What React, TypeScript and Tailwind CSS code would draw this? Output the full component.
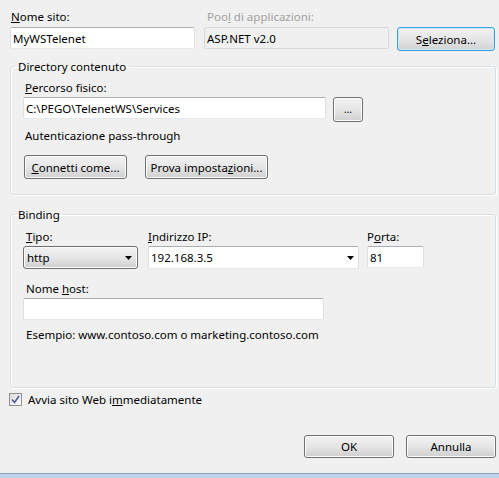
import React from 'react'

const chrome =
  'flex items-center rounded-[3px] border border-[#707070] bg-gradient-to-b from-[#f2f2f2] via-[#e6e6e6] to-[#cfcfcf] shadow-[inset_0_0_0_1px_#fcfcfc] text-black'
const btn = `${chrome} justify-center`

const field =
  'flex items-center h-[22px] rounded-[2px] border border-[#dbdfe6] border-t-[#abadb3] border-b-[#e3e9ef] bg-white pl-[2px] text-black'

const Arrow = () => (
  <svg width="7" height="4" viewBox="0 0 7 4" className="shrink-0">
    <polygon points="0,0 7,0 3.5,4" fill="#000" />
  </svg>
)

const Group: React.FC<{ title: string; className?: string; children: React.ReactNode }> = ({ title, className, children }) => (
  <fieldset
    className={`ml-[10px] w-[486px] rounded-[3px] border border-[#d5dfe5] px-[4px] shadow-[inset_1px_1px_0_#fff,1px_1px_0_#fff] ${className ?? ''}`}
  >
    <legend className="px-[3px] leading-[15px] text-black">{title}</legend>
    <div className="pl-[8px]">{children}</div>
  </fieldset>
)

export default function App() {
  return (
    <div className="flex h-[478px] w-[499px] flex-col overflow-hidden bg-[#f0f0f0] font-['Noto_Sans',sans-serif] text-[11.5px] leading-[15px] text-black">
      {/* site name / app pool */}
      <div className="flex items-start pl-[10px] pt-[9px]">
        <div className="w-[185px]">
          <div className="pl-[1px]">
            <u>N</u>ome sito:
          </div>
          <div className={`${field} mt-[3px] pl-[2px]`}>MyWSTelenet</div>
        </div>
        <div className="ml-[9px] w-[185px]">
          <div className="pl-[3px] text-[#a0a0a0]">
            Poo<u>l</u> di applicazioni:
          </div>
          <div className="mt-[3px] flex h-[22px] items-center rounded-[2px] border border-[#d9d9d9] bg-[#f0f0f0] pl-[2px]">ASP.NET v2.0</div>
        </div>
        <div className="ml-[8px] mt-[18px] flex h-[24px] w-[98px] items-center justify-center rounded-[3px] border border-[#3c9fd6] bg-gradient-to-b from-[#f2f2f2] via-[#e6e6e6] to-[#d2d2d2] shadow-[inset_0_0_0_1px_#c4ebfc]">
          S<u>e</u>leziona...
        </div>
      </div>

      {/* content directory */}
      <Group title="Directory contenuto" className="mt-[8px] pb-[15px]">
        <div className="mt-[6px] pl-[2px]">
          <u>P</u>ercorso fisico:
        </div>
        <div className="mt-[2px] flex items-start">
          <div className={`${field} w-[303px]`}>C:\PEGO\TelenetWS\Services</div>
          <div className={`${btn} ml-[7px] h-[25px] w-[30px] text-[10px]`}>...</div>
        </div>
        <div className="mt-[6px] pl-[2px]">Autenticazione pass-through</div>
        <div className="mt-[12px] flex gap-[18px] pl-[1px]">
          <div className={`${btn} h-[24px] w-[103px]`}>
            <span>
              <u>C</u>onnetti come...
            </span>
          </div>
          <div className={`${btn} h-[24px] w-[123px]`}>
            <span>
              Prova imposta<u>z</u>ioni...
            </span>
          </div>
        </div>
      </Group>

      {/* binding */}
      <Group title="Binding" className="mt-[12px] pb-[45px]">
        <div className="mt-[7px] flex items-start">
          <div className="w-[115px]">
            <div className="pl-[3px]">
              <u>T</u>ipo:
            </div>
            <div className={`${chrome} mt-[2px] h-[23px] justify-between pl-[3px] pr-[5px]`}>
              <span>http</span>
              <Arrow />
            </div>
          </div>
          <div className="ml-[10px] w-[211px]">
            <div>
              <u>I</u>ndirizzo IP:
            </div>
            <div className={`${field} mt-[2px] h-[23px] justify-between pr-[4px]`}>
              <span>192.168.3.5</span>
              <Arrow />
            </div>
          </div>
          <div className="ml-[8px] w-[57px]">
            <div>
              P<u>o</u>rta:
            </div>
            <div className={`${field} mt-[2px]`}>81</div>
          </div>
        </div>
        <div className="mt-[12px] pl-[3px]">
          Nome <u>h</u>ost:
        </div>
        <div className={`${field} mt-[2px] w-[301px]`} />
        <div className="mt-[7px] pl-[3px]">Esempio: www.contoso.com o marketing.contoso.com</div>
      </Group>

      {/* start immediately */}
      <div className="ml-[9px] mt-[4px] flex items-center gap-[6px]">
        <div className="flex h-[13px] w-[13px] items-center justify-center border border-[#8f8f8f] bg-gradient-to-br from-[#dcdcdc] to-[#fbfbfb]">
          <svg width="9" height="9" viewBox="0 0 9 9">
            <path d="M1 4.5 L3.5 7.5 L8 1" fill="none" stroke="#4a5f97" strokeWidth="1.6" />
          </svg>
        </div>
        <span>
          Avvia sito Web i<u>m</u>mediatamente
        </span>
      </div>

      {/* footer buttons */}
      <div className="mb-[15px] mt-auto flex justify-end gap-[12px] pr-[3px]">
        <div className={`${btn} h-[23px] w-[90px]`}>OK</div>
        <div className={`${btn} h-[23px] w-[90px]`}>Annulla</div>
      </div>
      <div className="h-[5px] shrink-0 border-t border-[#8e9fb3] bg-[#bfd4ec]" />
    </div>
  )
}
